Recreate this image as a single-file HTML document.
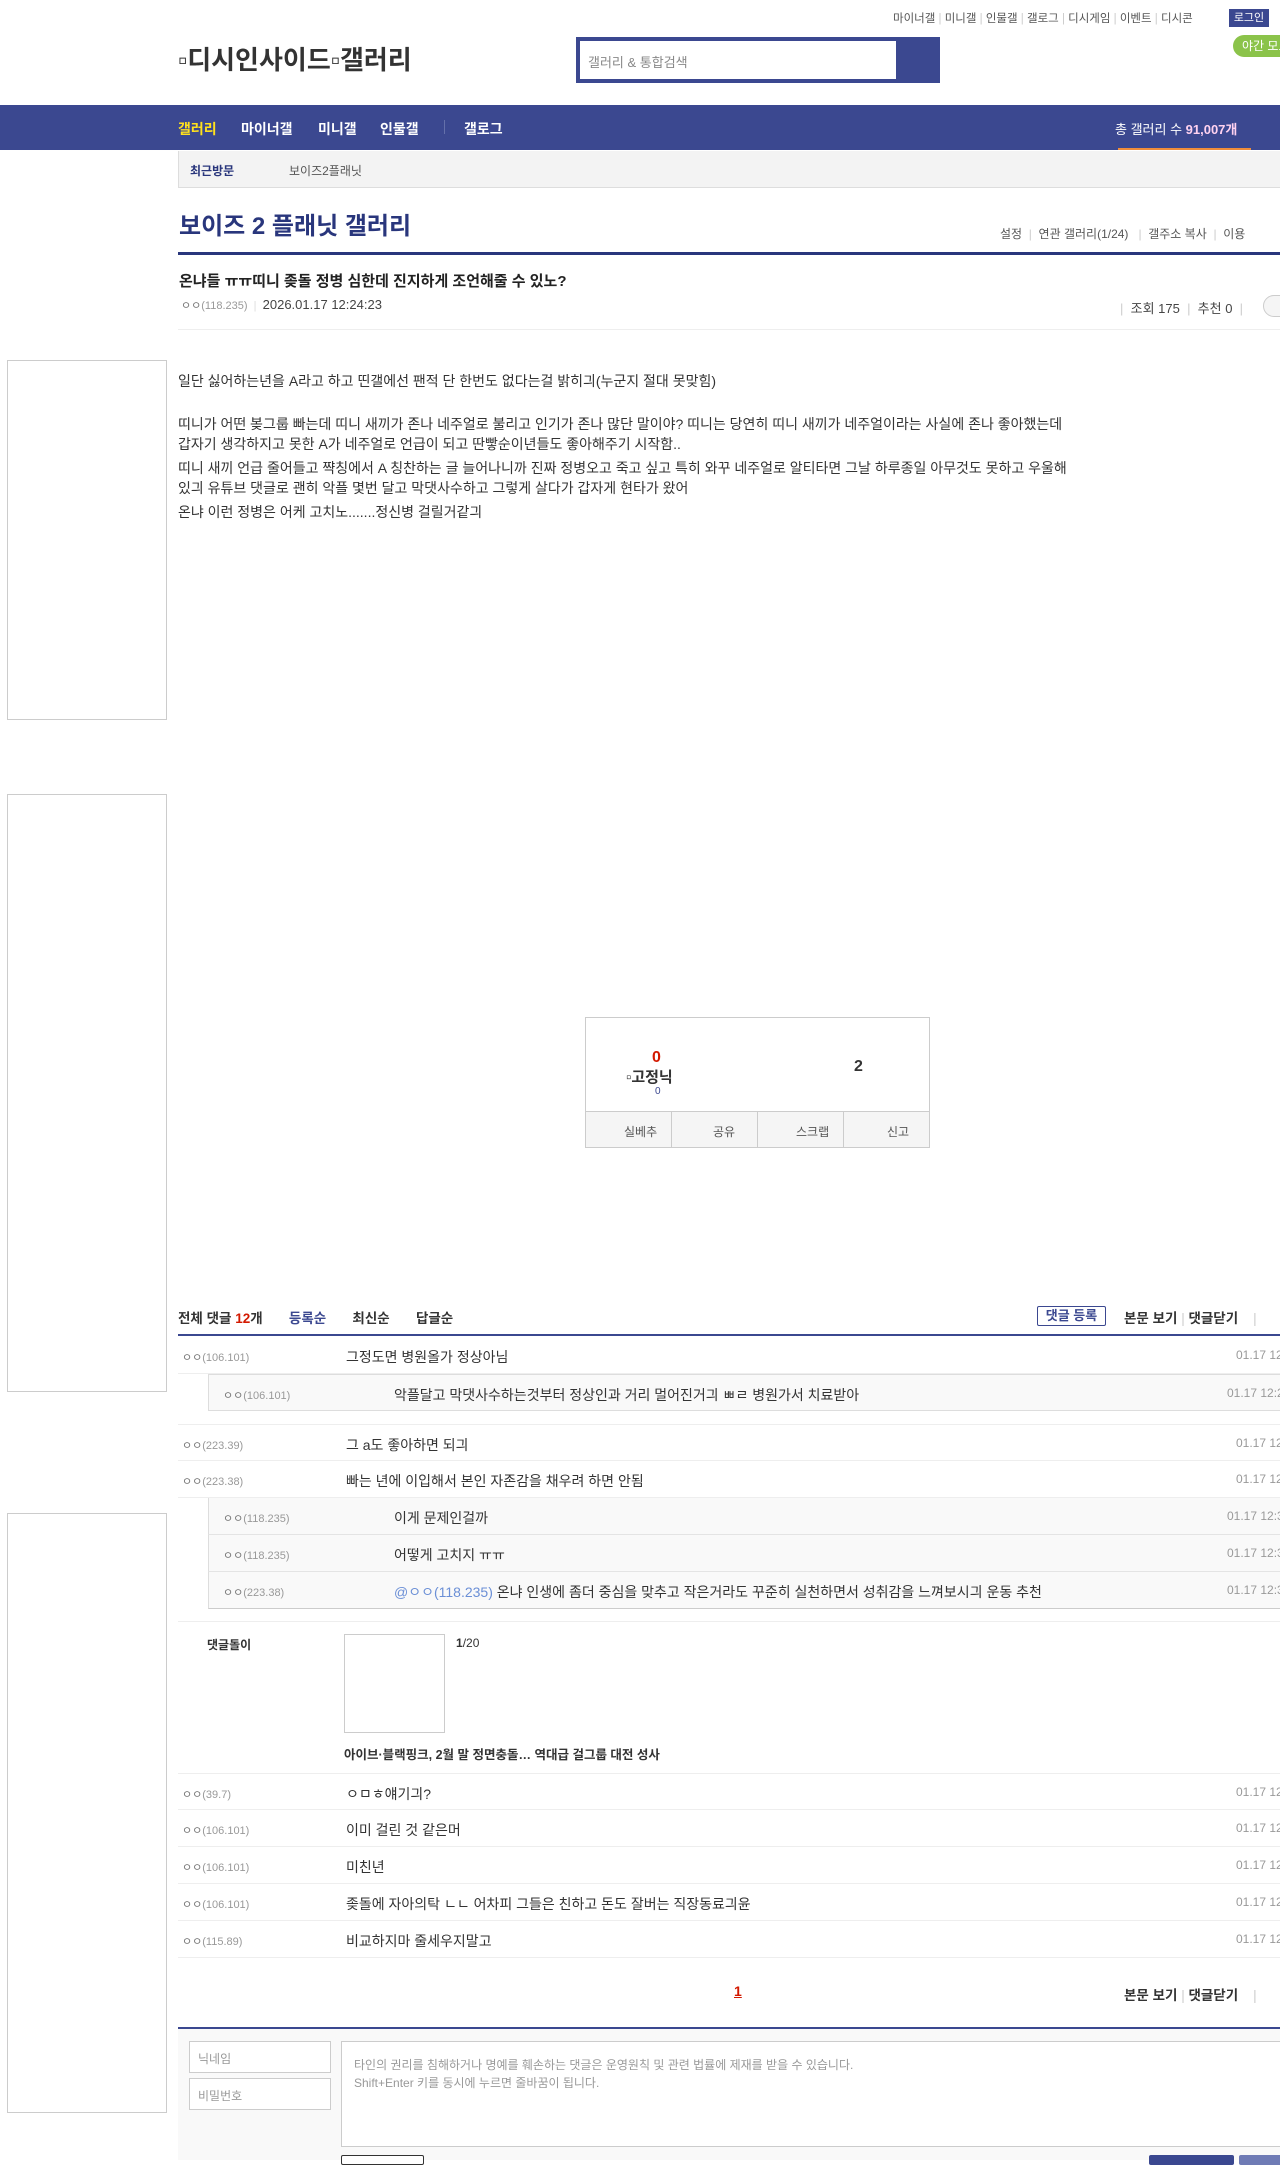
<!DOCTYPE html>
<html><head><meta charset="utf-8"><style>
*{margin:0;padding:0;box-sizing:border-box}
body{width:1280px;height:2160px;overflow:hidden;background:#fff;font-family:"Liberation Sans","Noto Sans CJK KR",sans-serif;color:#333;position:relative;font-size:12px}
.a,.a *,.row span,.rp span{white-space:nowrap}
.a{position:absolute}
.nav{position:absolute;left:0;top:105px;width:1280px;height:45px;background:#3b4890}
.nav span{position:absolute;top:14px;color:#fff;font-weight:bold;font-size:14px;white-space:nowrap}
.ad{position:absolute;left:7px;width:160px;border:1px solid #ccc}
.row{position:absolute;left:178px;width:1110px;height:37px;border-bottom:1px solid #eee}
.row .n,.rp .n{position:absolute;top:12px;color:#777;font-size:11px}
.row .n{left:4px}
.rp .n{left:14px}
i{font-style:normal;color:#999}
.row .t{position:absolute;left:168px;top:10px;font-size:14px;color:#333}
.row .d{position:absolute;left:1058px;top:11px;color:#999;font-size:12px}
.rp{position:absolute;left:208px;width:1080px;height:37px;background:#f9f9f9;border-bottom:1px solid #e4e4e4}
.rp .t{position:absolute;left:185px;top:10px;font-size:14px;color:#333}
.rp .d{position:absolute;left:1018px;top:11px;color:#999;font-size:12px}
</style></head><body>
<div class="a" style="left:893px;top:10px;font-size:11.5px;color:#555">마이너갤 <span style="color:#ccc">|</span> 미니갤 <span style="color:#ccc">|</span> 인물갤 <span style="color:#ccc">|</span> 갤로그 <span style="color:#ccc">|</span> 디시게임 <span style="color:#ccc">|</span> 이벤트 <span style="color:#ccc">|</span> 디시콘</div>
<div class="a" style="left:1229px;top:9px;width:40px;height:18px;background:#3b4890;color:#fff;font-size:11px;text-align:center;line-height:18px">로그인</div>
<div class="a" style="left:1233px;top:35px;width:60px;height:22px;background:#8bc34a;border-radius:11px;color:#fff;font-size:12px;line-height:22px;padding-left:9px">야간 모드</div>
<div class="a" style="left:178px;top:40px;font-size:26px;font-weight:bold;color:#333">▫디시인사이드▫갤러리</div>
<div class="a" style="left:576px;top:37px;width:364px;height:46px;background:#3b4890"></div>
<div class="a" style="left:580px;top:41px;width:316px;height:38px;background:#fff;color:#888;font-size:13px;padding:11px 8px">갤러리 &amp; 통합검색</div>
<div class="nav">
<span style="left:178px;color:#ffe11d">갤러리</span><span style="left:241px">마이너갤</span><span style="left:318px">미니갤</span><span style="left:380px">인물갤</span>
<span style="left:444px;top:15px;width:1px;height:14px;background:#6470aa"></span><span style="left:464px">갤로그</span>
<span style="left:1115px;font-weight:normal;font-size:13px">총 갤러리 수 <b style="color:#ffd2f0">91,007개</b></span>
<span style="left:1118px;top:43px;width:133px;height:2px;background:#f08d3a"></span>
</div>
<div class="a" style="left:178px;top:151px;width:1110px;height:37px;background:#f3f3f3;border:1px solid #ddd;border-top:0"></div>
<div class="a" style="left:190px;top:162px;font-size:12px;font-weight:bold;color:#29367c">최근방문</div>
<div class="a" style="left:289px;top:162px;font-size:12px;color:#555">보이즈2플래닛</div>
<div class="a" style="left:179px;top:206px;font-size:24px;font-weight:bold;color:#29367c">보이즈 2 플래닛 갤러리</div>
<div class="a" style="left:1000px;top:225px;font-size:12px;color:#555">설정 &nbsp;<span style="color:#ccc">|</span>&nbsp; 연관 갤러리(1/24) &nbsp;&nbsp;<span style="color:#ccc">|</span>&nbsp; 갤주소 복사 &nbsp;<span style="color:#ccc">|</span>&nbsp; 이용</div>
<div class="a" style="left:178px;top:252px;width:1110px;height:3px;background:#29367c"></div>
<div class="a" style="left:179px;top:270px;font-size:15px;font-weight:bold;color:#222">온냐들 ㅠㅠ띠니 좆돌 정병 심한데 진지하게 조언해줄 수 있노?</div>
<div class="a" style="left:181px;top:297px;font-size:11px;color:#777">ㅇㅇ<i>(118.235)</i> &nbsp;<span style="color:#ddd">|</span>&nbsp; <span style="font-size:13px;color:#444">2026.01.17 12:24:23</span></div>
<div class="a" style="left:1120px;top:298px;font-size:13px;color:#444"><span style="color:#ccc">|</span>&nbsp; 조회 175 &nbsp;<span style="color:#ccc">|</span>&nbsp; 추천 0 &nbsp;<span style="color:#ccc">|</span></div>
<div class="a" style="left:1263px;top:295px;width:30px;height:22px;border:1px solid #ccc;border-radius:11px;background:#f5f5f5"></div>
<div class="a" style="left:178px;top:329px;width:1110px;height:1px;background:#eee"></div>
<div class="ad" style="top:360px;height:360px"></div>
<div class="ad" style="top:794px;height:598px"></div>
<div class="ad" style="top:1513px;height:600px"></div>
<div class="a" style="left:178px;top:372px;font-size:14px;line-height:19.5px;color:#333">일단 싫어하는년을 A라고 하고 띤갤에선 팬적 단 한번도 없다는걸 밝히긔(누군지 절대 못맞힘)</div>
<div class="a" style="left:178px;top:415px;font-size:14px;line-height:19.5px;color:#333">띠니가 어떤 봊그룹 빠는데 띠니 새끼가 존나 네주얼로 불리고 인기가 존나 많단 말이야? 띠니는 당연히 띠니 새끼가 네주얼이라는 사실에 존나 좋아했는데<br>갑자기 생각하지고 못한 A가 네주얼로 언급이 되고 딴빻순이년들도 좋아해주기 시작함..</div>
<div class="a" style="left:178px;top:459px;font-size:14px;line-height:19.5px;color:#333">띠니 새끼 언급 줄어들고 쨕칭에서 A 칭찬하는 글 늘어나니까 진짜 정병오고 죽고 싶고 특히 와꾸 네주얼로 알티타면 그날 하루종일 아무것도 못하고 우울해<br>있긔 유튜브 댓글로 괜히 악플 몇번 달고 막댓사수하고 그렇게 살다가 갑자게 현타가 왔어</div>
<div class="a" style="left:178px;top:503px;font-size:14px;line-height:19.5px;color:#333">온냐 이런 정병은 어케 고치노.......정신병 걸릴거같긔</div>
<div class="a" style="left:585px;top:1017px;width:345px;height:131px;border:1px solid #ccc"></div>
<div class="a" style="left:586px;top:1111px;width:343px;height:36px;background:#f5f5f5;border-top:1px solid #ccc"></div>
<div class="a" style="left:671px;top:1112px;width:1px;height:36px;background:#ccc"></div>
<div class="a" style="left:757px;top:1112px;width:1px;height:36px;background:#ccc"></div>
<div class="a" style="left:843px;top:1112px;width:1px;height:36px;background:#ccc"></div>
<div class="a" style="left:624px;top:1123px;font-size:12px;color:#555">실베추</div>
<div class="a" style="left:713px;top:1123px;font-size:12px;color:#555">공유</div>
<div class="a" style="left:796px;top:1123px;font-size:12px;color:#555">스크랩</div>
<div class="a" style="left:887px;top:1123px;font-size:12px;color:#555">신고</div>
<div class="a" style="left:652px;top:1049px;font-size:16px;font-weight:bold;color:#d31900">0</div>
<div class="a" style="left:626px;top:1066px;font-size:15px;font-weight:bold;color:#333">▫고정닉</div>
<div class="a" style="left:655px;top:1086px;font-size:10px;color:#3b4890">0</div>
<div class="a" style="left:854px;top:1058px;font-size:16px;font-weight:bold;color:#333">2</div>
<div class="a" style="left:178px;top:1307px;font-size:13.5px;font-weight:bold;color:#333">전체 댓글 <span style="color:#d31900">12</span>개 &nbsp;&nbsp;&nbsp;&nbsp;&nbsp; <span style="color:#3b4890">등록순</span> &nbsp;&nbsp;&nbsp;&nbsp;&nbsp; 최신순 &nbsp;&nbsp;&nbsp;&nbsp;&nbsp; 답글순</div>
<div class="a" style="left:1037px;top:1306px;width:69px;height:20px;border:1px solid #3b4890;border-radius:2px;color:#3b4890;font-weight:bold;font-size:13px;text-align:center;line-height:18px">댓글 등록</div>
<div class="a" style="left:1124px;top:1307px;font-size:13.5px;font-weight:bold;color:#333">본문 보기 <span style="color:#ccc;font-weight:normal">|</span> 댓글닫기 &nbsp;&nbsp;&nbsp;<span style="color:#ccc;font-weight:normal">|</span></div>
<div class="a" style="left:178px;top:1334px;width:1110px;height:2px;background:#3b4890"></div>
<div class="row" style="top:1337px"><span class="n">ㅇㅇ<i>(106.101)</i></span><span class="t">그정도면 병원올가 정상아님</span><span class="d">01.17 12:25:10</span></div>
<div class="rp" style="top:1374px;border:1px solid #ddd"><span class="n">ㅇㅇ<i>(106.101)</i></span><span class="t">악플달고 막댓사수하는것부터 정상인과 거리 멀어진거긔 ㅃㄹ 병원가서 치료받아</span><span class="d">01.17 12:26:10</span></div>
<div class="row" style="top:1424px;border-top:1px solid #eee"><span class="n">ㅇㅇ<i>(223.39)</i></span><span class="t">그 a도 좋아하면 되긔</span><span class="d">01.17 12:27:10</span></div>
<div class="row" style="top:1461px"><span class="n">ㅇㅇ<i>(223.38)</i></span><span class="t">빠는 년에 이입해서 본인 자존감을 채우려 하면 안됨</span><span class="d">01.17 12:28:10</span></div>
<div class="rp" style="top:1498px;border-left:1px solid #ddd"><span class="n">ㅇㅇ<i>(118.235)</i></span><span class="t">이게 문제인걸까</span><span class="d">01.17 12:30:10</span></div>
<div class="rp" style="top:1535px;border-left:1px solid #ddd"><span class="n">ㅇㅇ<i>(118.235)</i></span><span class="t">어떻게 고치지 ㅠㅠ</span><span class="d">01.17 12:31:10</span></div>
<div class="rp" style="top:1572px;border-left:1px solid #ddd;border-bottom:1px solid #ccc"><span class="n">ㅇㅇ<i>(223.38)</i></span><span class="t"><span style="color:#6b8fd6">@ㅇㅇ(118.235)</span> 온냐 인생에 좀더 중심을 맞추고 작은거라도 꾸준히 실천하면서 성취감을 느껴보시긔 운동 추천</span><span class="d">01.17 12:32:10</span></div>
<div class="a" style="left:178px;top:1621px;width:1110px;height:1px;background:#eee"></div>
<div class="a" style="left:207px;top:1636px;font-size:12px;font-weight:bold;color:#333">댓글돌이</div>
<div class="a" style="left:344px;top:1634px;width:101px;height:99px;border:1px solid #ccc"></div>
<div class="a" style="left:456px;top:1636px;font-size:12px;color:#333"><b>1</b>/20</div>
<div class="a" style="left:344px;top:1744px;font-size:12.5px;font-weight:bold;color:#333">아이브·블랙핑크, 2월 말 정면충돌… 역대급 걸그룹 대전 성사</div>
<div class="row" style="top:1773px;border-top:1px solid #eee"><span class="n">ㅇㅇ<i>(39.7)</i></span><span class="t">ㅇㅁㅎ얘기긔?</span><span class="d">01.17 12:33:10</span></div>
<div class="row" style="top:1810px"><span class="n">ㅇㅇ<i>(106.101)</i></span><span class="t">이미 걸린 것 같은머</span><span class="d">01.17 12:34:10</span></div>
<div class="row" style="top:1847px"><span class="n">ㅇㅇ<i>(106.101)</i></span><span class="t">미친년</span><span class="d">01.17 12:35:10</span></div>
<div class="row" style="top:1884px"><span class="n">ㅇㅇ<i>(106.101)</i></span><span class="t">좆돌에 자아의탁 ㄴㄴ 어차피 그들은 친하고 돈도 잘버는 직장동료긔윤</span><span class="d">01.17 12:36:10</span></div>
<div class="row" style="top:1921px"><span class="n">ㅇㅇ<i>(115.89)</i></span><span class="t">비교하지마 줄세우지말고</span><span class="d">01.17 12:37:10</span></div>
<div class="a" style="left:734px;top:1983px;font-size:14px;font-weight:bold;color:#d31900;text-decoration:underline">1</div>
<div class="a" style="left:1124px;top:1984px;font-size:13.5px;font-weight:bold;color:#333">본문 보기 <span style="color:#ccc;font-weight:normal">|</span> 댓글닫기 &nbsp;&nbsp;&nbsp;<span style="color:#ccc;font-weight:normal">|</span></div>
<div class="a" style="left:178px;top:2027px;width:1110px;height:2px;background:#3b4890"></div>
<div class="a" style="left:178px;top:2029px;width:1110px;height:131px;background:#f9f9f9"></div>
<div class="a" style="left:189px;top:2041px;width:142px;height:32px;border:1px solid #ccc;background:#fff;color:#999;padding:8px;font-size:12px">닉네임</div>
<div class="a" style="left:189px;top:2078px;width:142px;height:32px;border:1px solid #ccc;background:#fff;color:#999;padding:8px;font-size:12px">비밀번호</div>
<div class="a" style="left:341px;top:2041px;width:950px;height:106px;border:1px solid #ccc;background:#fff;color:#999;padding:14px 12px;font-size:12px;line-height:18px">타인의 권리를 침해하거나 명예를 훼손하는 댓글은 운영원칙 및 관련 법률에 제재를 받을 수 있습니다.<br>Shift+Enter 키를 동시에 누르면 줄바꿈이 됩니다.</div>
<div class="a" style="left:341px;top:2155px;width:83px;height:10px;border:1px solid #333;border-radius:2px;background:#fff"></div>
<div class="a" style="left:1149px;top:2155px;width:85px;height:10px;background:#3b4890;border-radius:2px"></div>
<div class="a" style="left:1239px;top:2155px;width:50px;height:10px;background:#6f7bb5;border-radius:2px"></div>
</body></html>
